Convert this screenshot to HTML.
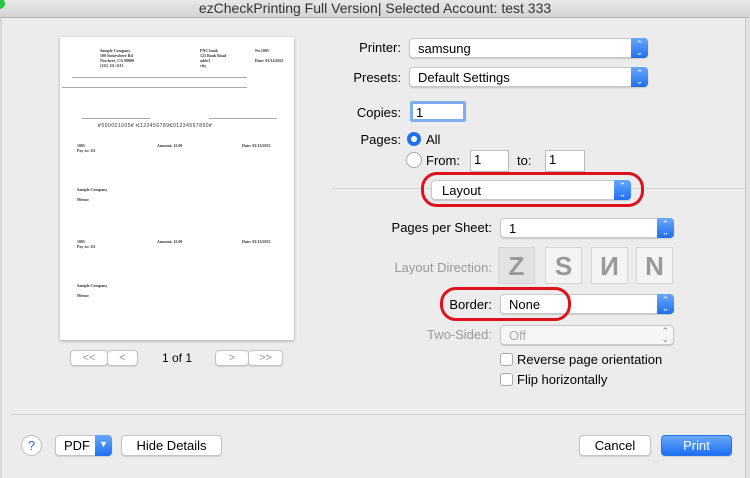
<!DOCTYPE html><html><head><style>
*{box-sizing:border-box;margin:0;padding:0}
body{width:750px;height:478px;background:#ececec;font-family:"Liberation Sans",sans-serif;font-size:13px;color:#000;position:relative;overflow:hidden}
.a{position:absolute}
.lbl{position:absolute;text-align:right;white-space:nowrap}
.pop{position:absolute;background:#fff;border:1px solid #c8c8c8;border-radius:4px;box-shadow:0 1px 1px rgba(0,0,0,.15);padding:2px 8px;font-size:13px;line-height:15px}
.pop .s{position:absolute;right:-1px;top:-1px;bottom:-1px;width:17px;background:linear-gradient(#68a8fb,#1f6ff0);border-radius:0 4px 4px 0;color:#fff;font-size:9px;text-align:center;line-height:8px;padding-top:2px}
.fld{position:absolute;background:#fff;border:1px solid #bbb;padding:1px 3px;font-size:13px}
.btn{position:absolute;background:#fff;border:1px solid #c4c4c4;border-radius:4px;box-shadow:0 1px 1px rgba(0,0,0,.12);text-align:center;font-size:13px;line-height:19px}
.red{position:absolute;border:3px solid #e0111a;border-radius:16px}
.cb{position:absolute;width:13px;height:13px;background:#fff;border:1px solid #aaa;border-radius:3px}
.ld{position:absolute;width:37px;height:37px;border:1px solid #d4d4d4;background:#f4f4f4;color:#999;font-size:26px;font-weight:bold;text-align:center;line-height:36px}
.t{font-family:"Liberation Serif",serif;font-size:4px;position:absolute;font-weight:bold;color:#333}
</style></head><body>
<div class="a" style="left:0;top:0;width:750px;height:18px;background:linear-gradient(#e8e8e8,#d3d3d3);border-bottom:1px solid #b5b5b5;text-align:center;font-size:14px;line-height:17px;color:#333">ezCheckPrinting Full Version| Selected Account: test 333</div>
<div class="a" style="left:-6px;top:-2px;width:11px;height:11px;border-radius:50%;background:#28c940"></div>
<div class="a" style="left:745px;top:18px;width:5px;height:460px;background:#e2e2e2;border-left:1px solid #c9c9c9"></div>
<div class="a" style="left:0;top:18px;width:2px;height:460px;background:#d8d8d8"></div>
<div class="a" style="left:60px;top:37px;width:234px;height:303px;background:#fff;box-shadow:0 1px 3px rgba(0,0,0,.3)">
<div class="t" style="left:40px;top:11px">Sample Company<br>100 Somewhere Rd<br>Nowhere, CA 90000<br>(111) 111-1111</div>
<div class="t" style="left:140px;top:11px">PNC bank<br>123 Bank Road<br>addr1<br>city</div>
<div class="t" style="left:195px;top:11px">No.1005<br><br>Date: 03/14/2023</div>
<div class="a" style="left:12px;top:40px;width:175px;border-top:1px solid #aaa"></div>
<div class="a" style="left:2px;top:50px;width:185px;border-top:1px solid #aaa"></div>
<div class="a" style="left:22px;top:81px;width:68px;border-top:1px solid #aaa"></div>
<div class="a" style="left:149px;top:81px;width:68px;border-top:1px solid #aaa"></div>
<div class="a" style="left:38px;top:86px;font-size:5px;color:#333;letter-spacing:.5px">⑈000001005⑈ ⑆123456789⑆01234567890⑈</div>
<div class="t" style="left:17px;top:106px">1005<br>Pay to: 111</div>
<div class="t" style="left:97px;top:106px">Amount: 12.00</div>
<div class="t" style="left:182px;top:106px">Date: 03/14/2023</div>
<div class="t" style="left:17px;top:150px">Sample Company<br><br>Memo:</div>
<div class="t" style="left:17px;top:202px">1005<br>Pay to: 111</div>
<div class="t" style="left:97px;top:202px">Amount: 12.00</div>
<div class="t" style="left:182px;top:202px">Date: 03/14/2023</div>
<div class="t" style="left:17px;top:246px">Sample Company<br><br>Memo:</div>
</div>
<div class="btn" style="left:70px;top:350px;width:38px;height:16px;line-height:14px;color:#999;font-size:11px">&lt;&lt;</div>
<div class="btn" style="left:107px;top:350px;width:31px;height:16px;line-height:14px;color:#999;font-size:11px">&lt;</div>
<div class="a" style="left:162px;top:351px;font-size:12px">1 of 1</div>
<div class="btn" style="left:215px;top:350px;width:34px;height:16px;line-height:14px;color:#999;font-size:11px">&gt;</div>
<div class="btn" style="left:248px;top:350px;width:35px;height:16px;line-height:14px;color:#999;font-size:11px">&gt;&gt;</div>
<div class="lbl" style="right:349px;top:40px">Printer:</div>
<div class="pop" style="left:409px;top:38px;width:239px;height:20px">samsung<div class="s">⌃<br>⌄</div></div>
<div class="lbl" style="right:349px;top:70px">Presets:</div>
<div class="pop" style="left:409px;top:67px;width:239px;height:20px">Default Settings<div class="s">⌃<br>⌄</div></div>
<div class="lbl" style="right:349px;top:105px">Copies:</div>
<div class="fld" style="left:410px;top:101px;width:56px;height:21px;border:3px solid #7eaef0;border-radius:2px">1</div>
<div class="lbl" style="right:349px;top:132px">Pages:</div>
<div class="a" style="left:407px;top:132px;width:14px;height:14px;border-radius:50%;background:#1f72ee"><div class="a" style="left:4px;top:4px;width:6px;height:6px;border-radius:50%;background:#fff"></div></div>
<div class="a" style="left:426px;top:132px">All</div>
<div class="a" style="left:406px;top:152px;width:16px;height:16px;border-radius:50%;background:#fff;border:1px solid #aaa"></div>
<div class="a" style="left:426px;top:153px">From:</div>
<div class="fld" style="left:470px;top:150px;width:39px;height:22px">1</div>
<div class="a" style="left:517px;top:153px">to:</div>
<div class="fld" style="left:545px;top:150px;width:40px;height:22px">1</div>
<div class="a" style="left:332px;top:188px;width:413px;border-top:1px solid #d4d4d4"></div>
<div class="pop" style="left:431px;top:180px;width:200px;height:20px;padding-left:10px">Layout<div class="s">⌃<br>⌄</div></div>
<div class="red" style="left:421px;top:172px;width:223px;height:35px"></div>
<div class="lbl" style="right:258px;top:220px">Pages per Sheet:</div>
<div class="pop" style="left:500px;top:218px;width:174px;height:20px">1<div class="s">⌃<br>⌄</div></div>
<div class="lbl" style="right:258px;top:260px;color:#999">Layout Direction:</div>
<div class="ld" style="left:498px;top:247px;background:#e2e2e2">Z</div>
<div class="ld" style="left:545px;top:247px">S</div>
<div class="ld" style="left:591px;top:247px">И</div>
<div class="ld" style="left:636px;top:247px">N</div>
<div class="lbl" style="right:258px;top:297px">Border:</div>
<div class="pop" style="left:500px;top:294px;width:174px;height:20px">None<div class="s">⌃<br>⌄</div></div>
<div class="red" style="left:440px;top:287px;width:131px;height:34px"></div>
<div class="lbl" style="right:258px;top:327px;color:#999">Two-Sided:</div>
<div class="pop" style="left:500px;top:325px;width:174px;height:20px;color:#aaa;background:#f6f6f6">Off<div class="a" style="right:4px;top:1px;font-size:9px;line-height:8px;color:#888">⌃<br>⌄</div></div>
<div class="cb" style="left:500px;top:353px"></div><div class="a" style="left:517px;top:352px">Reverse page orientation</div>
<div class="cb" style="left:500px;top:373px"></div><div class="a" style="left:517px;top:372px">Flip horizontally</div>
<div class="a" style="left:10px;top:414px;width:735px;border-top:1px solid #d4d4d4"></div>
<div class="a" style="left:21px;top:435px;width:21px;height:21px;border-radius:50%;background:#fff;border:1px solid #bbb;text-align:center;line-height:19px;color:#2a6ff0;font-size:13px">?</div>
<div class="btn" style="left:55px;top:435px;width:57px;height:21px;text-align:left;padding-left:8px">PDF<div class="a" style="right:-1px;top:-1px;width:17px;height:21px;background:linear-gradient(#68a8fb,#1f6ff0);border-radius:0 4px 4px 0;color:#fff;font-size:9px;text-align:center">▼</div></div>
<div class="btn" style="left:121px;top:435px;width:101px;height:21px">Hide Details</div>
<div class="btn" style="left:579px;top:435px;width:72px;height:21px">Cancel</div>
<div class="btn" style="left:661px;top:435px;width:71px;height:21px;background:linear-gradient(#69a9fb,#1c6ef2);color:#fff;border-color:#2a72e8">Print</div>
</body></html>
